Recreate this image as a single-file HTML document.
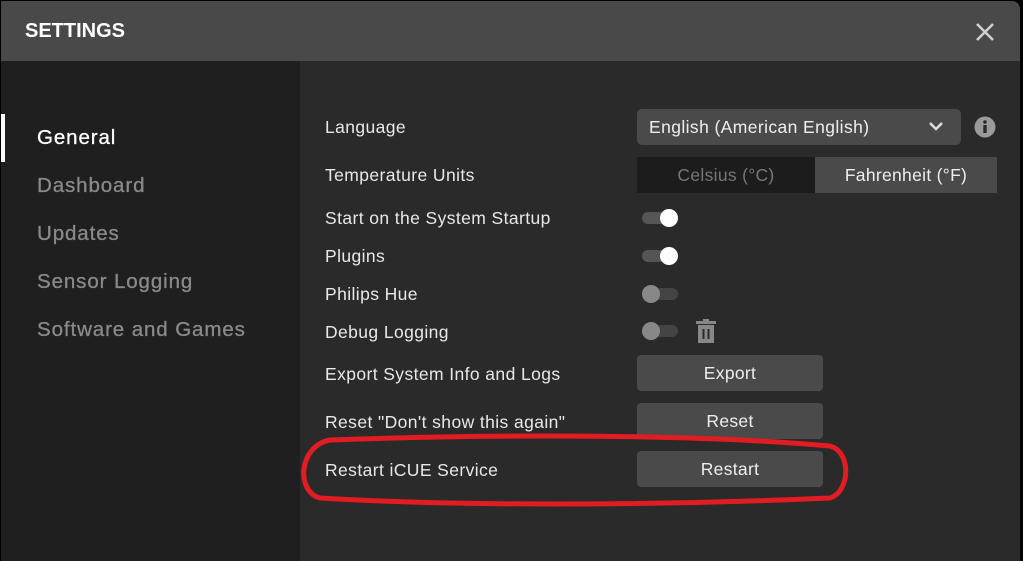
<!DOCTYPE html>
<html><head><style>
*{margin:0;padding:0;box-sizing:border-box}
body{width:1023px;height:561px;background:#000;font-family:"Liberation Sans",sans-serif;overflow:hidden;position:relative}
.win{position:absolute;left:1px;top:1px;width:1019px;height:560px;background:#2a2a2a;border-top-right-radius:8px;overflow:hidden}
.hdr{position:absolute;left:0;top:0;width:100%;height:60px;background:#494949}
.hdr .t{position:absolute;left:24px;top:19px;color:#fff;font-size:20px;font-weight:bold}
.side{position:absolute;left:0;top:60px;width:299px;height:500px;background:#1f1f1f}
.nav{position:absolute;left:36px;font-size:20.5px;color:#8a8a8a;letter-spacing:0.9px;-webkit-text-stroke:0.3px}
.lbl{position:absolute;left:324px;font-size:17.5px;color:#e8e8e8;letter-spacing:0.4px}
.btn{position:absolute;left:636px;width:186px;height:36px;background:#4a4a4a;border-radius:4px;color:#eee;font-size:17.5px;text-align:center;line-height:36px;letter-spacing:0.3px}
.tg{position:absolute;left:641px;width:36px;height:12px;border-radius:6px;background:#555}
.tg i{position:absolute;top:-3px;width:18px;height:18px;border-radius:50%}
</style></head><body>
<div class="win">
<div class="hdr"><div class="t">SETTINGS</div>
<svg style="position:absolute;left:974px;top:21px" width="20" height="20"><path d="M2 2L18 18M18 2L2 18" stroke="#d0d0d0" stroke-width="2.6"/></svg></div>
<div class="side">
<div style="position:absolute;left:0;top:53px;width:4px;height:48px;background:#fff"></div>
<div class="nav" style="top:65px;color:#fff">General</div>
<div class="nav" style="top:113px">Dashboard</div>
<div class="nav" style="top:161px">Updates</div>
<div class="nav" style="top:209px">Sensor Logging</div>
<div class="nav" style="top:257px">Software and Games</div>
</div>
<div class="lbl" style="top:116px">Language</div>
<div style="position:absolute;left:636px;top:108px;width:324px;height:36px;background:#4a4a4a;border-radius:5px;color:#eee;font-size:17.5px;line-height:36px;padding-left:12px;letter-spacing:0.4px">English (American English)
<svg style="position:absolute;left:292px;top:13px" width="14" height="10"><path d="M1 1L7 7L13 1" stroke="#ddd" stroke-width="2.5" fill="none"/></svg></div>
<svg style="position:absolute;left:973px;top:115px" width="22" height="22"><circle cx="11" cy="11" r="10.5" fill="#9a9a9a"/><circle cx="11" cy="6" r="1.8" fill="#2a2a2a"/><rect x="9.3" y="9" width="3.4" height="8" fill="#2a2a2a"/></svg>
<div class="lbl" style="top:164px">Temperature Units</div>
<div style="position:absolute;left:636px;top:156px;width:178px;height:36px;background:#1c1c1c;color:#777;font-size:17.5px;text-align:center;line-height:36px;letter-spacing:0.3px">Celsius (°C)</div>
<div style="position:absolute;left:814px;top:156px;width:182px;height:36px;background:#4a4a4a;color:#eee;font-size:17.5px;text-align:center;line-height:36px;letter-spacing:0.3px">Fahrenheit (°F)</div>
<div class="lbl" style="top:207px">Start on the System Startup</div>
<div class="tg" style="top:211px"><i style="left:18px;background:#fff"></i></div>
<div class="lbl" style="top:245px">Plugins</div>
<div class="tg" style="top:249px"><i style="left:18px;background:#fff"></i></div>
<div class="lbl" style="top:283px">Philips Hue</div>
<div class="tg" style="top:287px;background:#444"><i style="left:0;background:#888"></i></div>
<div class="lbl" style="top:321px">Debug Logging</div>
<div class="tg" style="top:324px;background:#444"><i style="left:0;background:#888"></i></div>
<svg style="position:absolute;left:694px;top:318px" width="22" height="25"><rect x="1" y="2" width="20" height="3" fill="#888"/><rect x="8" y="0" width="6" height="3" fill="#888"/><rect x="3" y="6" width="16" height="18" fill="#888"/><rect x="7.5" y="10" width="2" height="10" fill="#2a2a2a"/><rect x="12.5" y="10" width="2" height="10" fill="#2a2a2a"/></svg>
<div class="lbl" style="top:363px">Export System Info and Logs</div>
<div class="btn" style="top:354px">Export</div>
<div class="lbl" style="top:411px">Reset "Don't show this again"</div>
<div class="btn" style="top:402px">Reset</div>
<div class="lbl" style="top:459px">Restart iCUE Service</div>
<div class="btn" style="top:450px">Restart</div>
</div>
<svg style="position:absolute;left:0;top:0" width="1023" height="561"><path d="M330 440 C500 434 700 434 830 446 C852 452 850 492 830 498 C650 506 450 506 320 498 C296 492 298 446 330 440Z" fill="none" stroke="#e21c23" stroke-width="5"/></svg>
</body></html>
